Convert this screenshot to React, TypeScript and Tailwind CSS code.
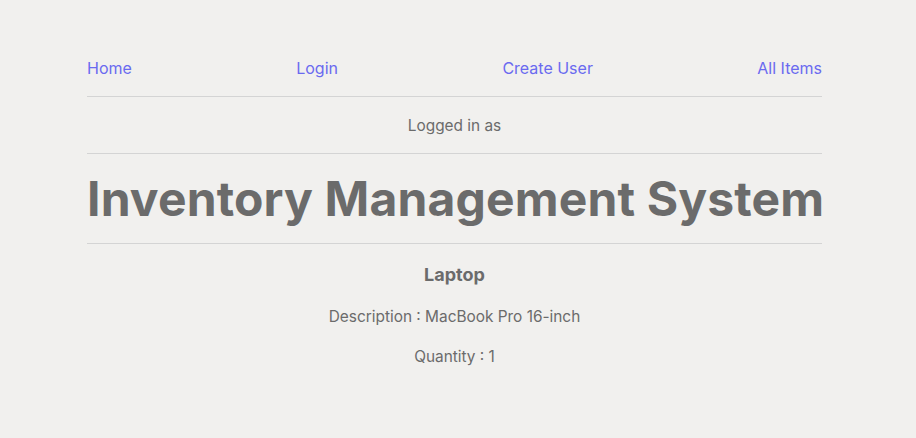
import React from "react";

export default function App() {
  return (
    <div className="min-h-[438px] w-full bg-[#f1f0ee] text-[#6b6b6b]" style={{ fontFamily: "Inter, 'Noto Sans', sans-serif" }}>
      <div className="ml-[87px] w-[735px] pt-[56px]">
        <nav className="flex justify-between border-b border-[#d4d4d4] pb-[16px] text-[16px] leading-[24px] text-[#6a6af0]">
          <a>Home</a>
          <a>Login</a>
          <a>Create User</a>
          <a>All Items</a>
        </nav>
        <div className="border-b border-[#d4d4d4] pt-[17px] pb-[15px] text-center text-[15.4px] leading-[24px]">Logged in as</div>
        <h1 className="border-b border-[#d4d4d4] pt-[16px] pb-[15px] text-center text-[48px] font-bold leading-[58px] tracking-[0.15px] whitespace-nowrap">
          Inventory Management System
        </h1>
        <div className="flex flex-col items-center text-[15.4px] leading-[24px]">
          <div className="mt-[19px] text-[18px] font-bold">Laptop</div>
          <div className="mt-[18px]">Description : MacBook Pro 16-inch</div>
          <div className="mt-[16px]">Quantity : 1</div>
        </div>
      </div>
    </div>
  );
}
